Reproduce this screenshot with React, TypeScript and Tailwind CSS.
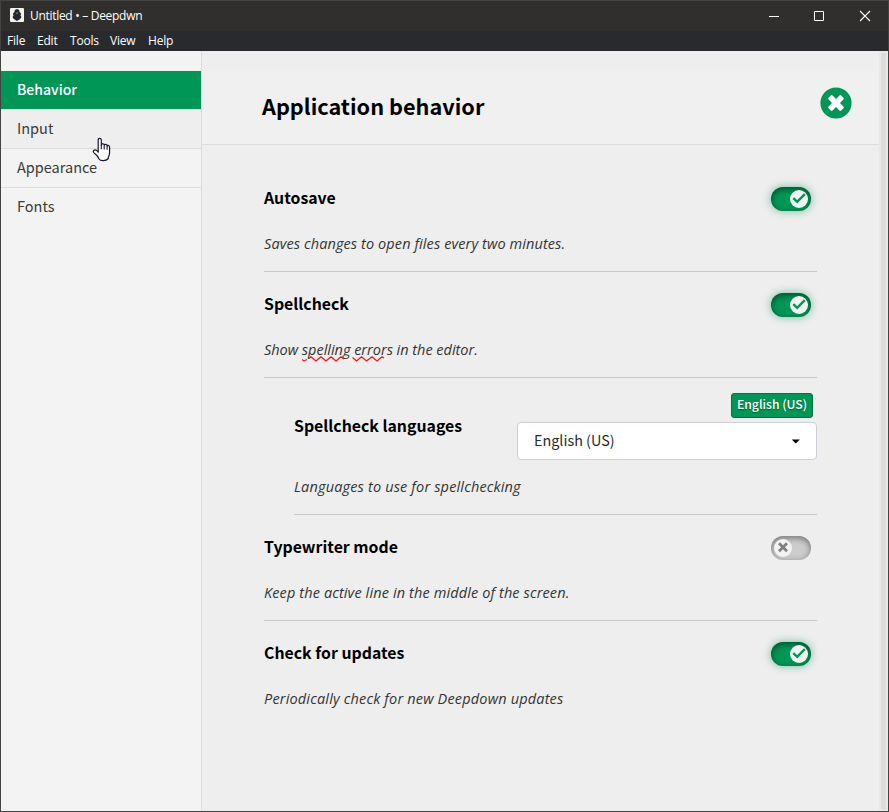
import type { ReactNode } from "react";

function Logo() {
  return (
    <svg className="mt-px self-start translate-y-[6px]" width="14" height="14" viewBox="0 0 14 14">
      <rect width="14" height="14" rx="1" fill="#f2f2f2" />
      <path d="M7 .9 9.2 2 9.500 4 10.900 5.300V6.700L10.300 7.300 11.200 8.300V9.800L9.800 11.300 7 13 4.200 11.300 2.800 9.800V8.300L3.700 7.300 3.100 6.700V5.300L4.500 4 4.800 2Z" fill="#24262b" />
      <path d="M5.600 5 7 4.200 8.400 5 7 6.200Z" fill="#77797d" />
    </svg>
  );
}

function TitleBar() {
  return (
    <header className="flex h-[30px] shrink-0 items-center bg-[#312f2d] pl-[9px] text-white">
      <Logo />
      <span className="ml-[6px] flex-1 whitespace-nowrap font-['Open_Sans',sans-serif] text-[12px] leading-4 tracking-[-.3px]">Untitled • – Deepdwn</span>
      <svg className="mr-[17px]" width="102" height="12" viewBox="0 0 102 12" fill="none" stroke="#fff">
        <path d="M0 6.500H10" />
        <path d="M45.500 1.500h9v9h-9z" />
        <path d="M91 1 101 11M101 1 91 11" strokeWidth="1.1" />
      </svg>
    </header>
  );
}

function MenuBar() {
  return (
    <nav className="flex h-[20px] shrink-0 items-center bg-[#292a2e] pl-[6px] font-['Open_Sans',sans-serif] text-[12px] leading-4 tracking-[-.2px] text-white">
      <span className="w-[30px]">File</span>
      <span className="w-[33px]">Edit</span>
      <span className="w-[40px]">Tools</span>
      <span className="w-[38px]">View</span>
      <span>Help</span>
    </nav>
  );
}

function HandCursor() {
  return (
    <svg className="absolute left-[91px] top-[27px]" width="19" height="25" viewBox="0 0 19 25">
      <path
        d="M6.200 15.200V3Q6.200 1.300 7.700 1.300T9.300 3V8.300Q9.300 6.700 10.900 6.900T12.200 8.300Q12.500 7.200 13.800 7.400T15.100 9Q15.500 8.200 16.500 8.500T17.600 10.200V15.600Q17.600 18 16.300 20.100V21.500Q14.500 23.700 11.200 23.700T6.700 21.500Q5.800 18.700 3.300 16.900T1.400 14.200Q1.600 12.700 3.300 12.800T6.200 15.200Z"
        fill="#fff"
        stroke="#151528"
        strokeWidth="1.200"
        strokeLinejoin="round"
      />
      <path d="M9.300 8V12.300M12.200 8.500V12.500M15.100 9V12.800" stroke="#151528" strokeWidth="1.100" fill="none" />
    </svg>
  );
}

function Sidebar() {
  return (
    <aside className="w-[201px] shrink-0 border-r border-[#dcdcdc] bg-[#f3f3f3] pt-[20px] text-[14.500px] leading-[36px] text-[#3a3a3a]">
      <div className="h-[39px] border-b border-[#dcdcdc] bg-[#009656] bg-clip-padding pl-[16px] text-[14px] font-medium text-white">Behavior</div>
      <div className="relative h-[39px] border-b border-[#dcdcdc] bg-[#eee] pl-[16px]">
        Input
        <HandCursor />
      </div>
      <div className="h-[39px] border-b border-[#dcdcdc] pl-[16px]">Appearance</div>
      <div className="h-[39px] pl-[16px]">Fonts</div>
    </aside>
  );
}

function Toggle({ on }: { on: boolean }) {
  return on ? (
    <span className="mr-[6px] flex h-[24px] w-[40px] justify-end rounded-full bg-[#009656] p-[3px] shadow-[inset_0_2px_6px_rgba(0,0,0,.5),0_0_8px_rgba(0,150,86,.55)]">
      <span className="h-[18px] w-[18px] rounded-full bg-[#f2f2f2]">
        <svg width="18" height="18" viewBox="0 0 18 18" fill="none" stroke="#009656" strokeWidth="2.400">
          <path d="M3.300 8.100 7.200 11.800 14.800 4.200" />
        </svg>
      </span>
    </span>
  ) : (
    <span className="mr-[6px] flex h-[24px] w-[40px] rounded-full bg-[#ccc] p-[3px] shadow-[inset_0_2px_6px_rgba(0,0,0,.45)]">
      <span className="h-[18px] w-[18px] rounded-full bg-[#f2f2f2]">
        <svg width="18" height="18" viewBox="0 0 18 18" fill="none" stroke="#808080" strokeWidth="2.800">
          <path d="M5 4.200 13 12.200M13 4.200 5 12.200" />
        </svg>
      </span>
    </span>
  );
}

function Squiggle() {
  return (
    <svg className="absolute left-[38px] top-[16px]" width="84" height="8" viewBox="0 0 84 8" fill="none" stroke="#f11" strokeWidth="1.200">
      <path d="M0 4.600 2 6 5 4.500M7 3.500 9 1.800 14 6 19 1.800 24 6 29 1.800 34 6 39 1.800 42 4" strokeLinejoin="round" />
      <path d="M50.500 2.500 54.500 6 59.500 1.800 64.500 6 70 1.800 75 6 80 1.800 82 3" strokeLinejoin="round" />
    </svg>
  );
}

function Heading({ children }: { children: ReactNode }) {
  return <h2 className="mb-[2px] text-[15.850px] font-bold leading-[22px] text-black">{children}</h2>;
}

function Description({ tracking, children }: { tracking: string; children: ReactNode }) {
  return <p className={`relative whitespace-nowrap font-['Open_Sans',sans-serif] text-[14.500px] font-normal italic leading-[22px] text-[#333] ${tracking}`}>{children}</p>;
}

function Setting({ title, on, tracking, last = false, children }: { title: string; on: boolean; tracking: string; last?: boolean; children: ReactNode }) {
  return (
    <section className={`flex h-[106px] flex-col gap-[22px] border-[#c8c8c8] pt-[21px] ${last ? "" : "border-b"}`}>
      <div className="flex h-[24px] items-center justify-between">
        <Heading>{title}</Heading>
        <Toggle on={on} />
      </div>
      <Description tracking={tracking}>{children}</Description>
    </section>
  );
}

export default function App() {
  return (
    <div className="flex h-[812px] w-[889px] flex-col overflow-hidden border border-[#444342] bg-[#eee] font-['Noto_Sans_CJK_SC',sans-serif]">
      <TitleBar />
      <MenuBar />
      <div className="flex min-h-0 flex-1">
        <Sidebar />
        <main className="min-w-0 flex-1 bg-[#eee] pt-[20px]">
          <div className="flex h-[74px] items-start justify-between border-b border-[#dcdcdc] bg-[#f0f0f0] pl-[60px] pr-[27px]">
            <h1 className="mt-[19px] text-[21.700px] font-bold leading-[32px] text-black">Application behavior</h1>
            <button className="mt-[16px]">
              <svg width="32" height="32" viewBox="0 0 32 32">
                <circle cx="16" cy="16" r="15.600" fill="#009656" />
                <g fill="#fff">
                  <rect x="7" y="13.200" width="18" height="5.600" rx="1.300" transform="rotate(45 16 16)" />
                  <rect x="7" y="13.200" width="18" height="5.600" rx="1.300" transform="rotate(-45 16 16)" />
                </g>
              </svg>
            </button>
          </div>
          <div className="mx-[62px] pt-[21px]">
            <Setting title="Autosave" on tracking="tracking-[.1px]">Saves changes to open files every two minutes.</Setting>
            <Setting title="Spellcheck" on tracking="tracking-[-.02px]">
              Show spelling errors in the editor.
              <Squiggle />
            </Setting>
            <section className="ml-[30px] h-[137px] border-b border-[#c8c8c8] pt-[15px]">
              <div className="mb-[16px] flex h-[67px] items-center justify-between">
                <Heading>Spellcheck languages</Heading>
                <div className="flex w-[300px] flex-col items-end gap-[4px]">
                  <span className="mr-[4px] h-[25px] w-[82px] whitespace-nowrap rounded-[3px] border border-[#00753f] bg-[#009656] text-center text-[12.200px] font-medium leading-[20px] text-white [text-shadow:0_1px_1px_rgba(0,0,0,.35)]">English (US)</span>
                  <div className="flex h-[38px] w-full items-center justify-between rounded-[4px] border border-[#cdced6] bg-white px-[16px] text-[14.400px] text-[#2b2b2b]">
                    <span className="mb-[2px]">English (US)</span>
                    <svg width="9" height="5" viewBox="0 0 9 5">
                      <path d="M.8 .5H8.800L4.800 4.600Z" />
                    </svg>
                  </div>
                </div>
              </div>
              <Description tracking="tracking-[.16px]">Languages to use for spellchecking</Description>
            </section>
            <Setting title="Typewriter mode" on={false} tracking="tracking-[.12px]">Keep the active line in the middle of the screen.</Setting>
            <Setting title="Check for updates" on last tracking="tracking-[.17px]">Periodically check for new Deepdown updates</Setting>
          </div>
        </main>
        <div className="w-[9px] shrink-0 bg-[#e8e8e8] p-[2px]">
          <div className="h-full bg-[#dcdcdc]" />
        </div>
      </div>
    </div>
  );
}
